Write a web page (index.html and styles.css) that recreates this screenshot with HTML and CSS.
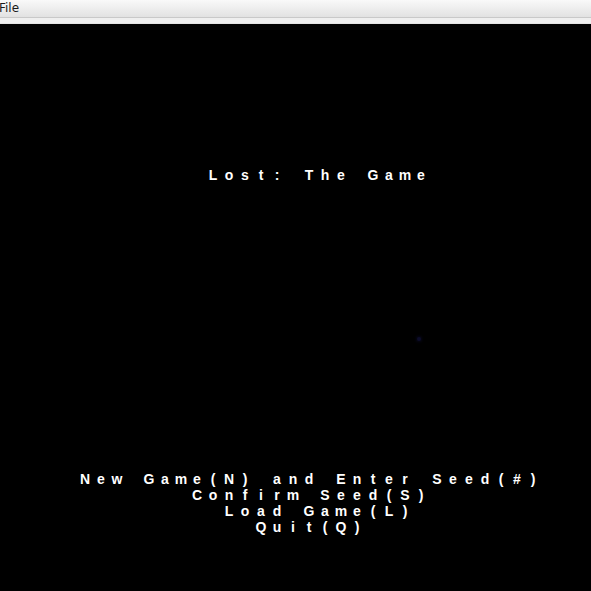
FILE: index.html
```html
<!DOCTYPE html>
<html>
<head>
<meta charset="utf-8">
<link rel="stylesheet" href="styles.css">
</head>
<body>
<div class="menubar"><span class="menu">File</span></div>
<div class="sep"></div>
<div class="canvas">
  <div class="row title">
    <span>L</span><span>o</span><span>s</span><span>t</span><span>:</span><span> </span><span>T</span><span>h</span><span>e</span><span> </span><span>G</span><span>a</span><span>m</span><span>e</span>
  </div>
  <div class="dot"></div>
  <div class="options">
    <div class="row r1">
      <span>N</span><span>e</span><span>w</span><span> </span><span>G</span><span>a</span><span>m</span><span>e</span><span>(</span><span>N</span><span>)</span><span> </span><span>a</span><span>n</span><span>d</span><span> </span><span>E</span><span>n</span><span>t</span><span>e</span><span>r</span><span> </span><span>S</span><span>e</span><span>e</span><span>d</span><span>(</span><span>#</span><span>)</span>
    </div>
    <div class="row r2">
      <span>C</span><span>o</span><span>n</span><span>f</span><span>i</span><span>r</span><span>m</span><span> </span><span>S</span><span>e</span><span>e</span><span>d</span><span>(</span><span>S</span><span>)</span>
    </div>
    <div class="row r3">
      <span>L</span><span>o</span><span>a</span><span>d</span><span> </span><span>G</span><span>a</span><span>m</span><span>e</span><span>(</span><span>L</span><span>)</span>
    </div>
    <div class="row r4">
      <span>Q</span><span>u</span><span>i</span><span>t</span><span>(</span><span>Q</span><span>)</span>
    </div>
  </div>
</div>
</body>
</html>
```

FILE: styles.css
```css
html, body {
  margin: 0;
  padding: 0;
  width: 591px;
  height: 591px;
  overflow: hidden;
  background: #000;
}

.menubar {
  height: 17px;
  background: linear-gradient(#f9f9f9, #e2e2e2);
  border-bottom: 1px solid #c9c9c9;
  display: flex;
  align-items: center;
}

.menu {
  font-family: "DejaVu Sans", "Liberation Sans", sans-serif;
  font-size: 12px;
  color: #1a1a1a;
  margin-left: -1px;
  line-height: 17px;
}

.sep {
  height: 5px;
  background: #efefef;
  border-bottom: 1px solid #e4e4e4;
}

.canvas {
  position: relative;
  height: 567px;
  background: #000;
  padding-top: 143px;
  box-sizing: border-box;
}

.row {
  display: flex;
  height: 16px;
  font-family: "Liberation Sans", Arial, sans-serif;
  font-weight: bold;
  font-size: 14px;
  line-height: 16px;
  color: #fff;
}

.row span {
  width: 16px;
  flex: none;
  text-align: center;
  white-space: pre;
}

.title { padding-left: 205px; }

.options {
  margin-top: 288px;
}

.r1 { padding-left: 77px; }
.r2 { padding-left: 189px; }
.r3 { padding-left: 221px; }
.r4 { padding-left: 253px; }

.dot {
  position: absolute;
  left: 417px;
  top: 313px;
  width: 4px;
  height: 4px;
  border-radius: 50%;
  background: #0c0c2a;
  box-shadow: 0 0 3px 1px #07071a;
}
```
